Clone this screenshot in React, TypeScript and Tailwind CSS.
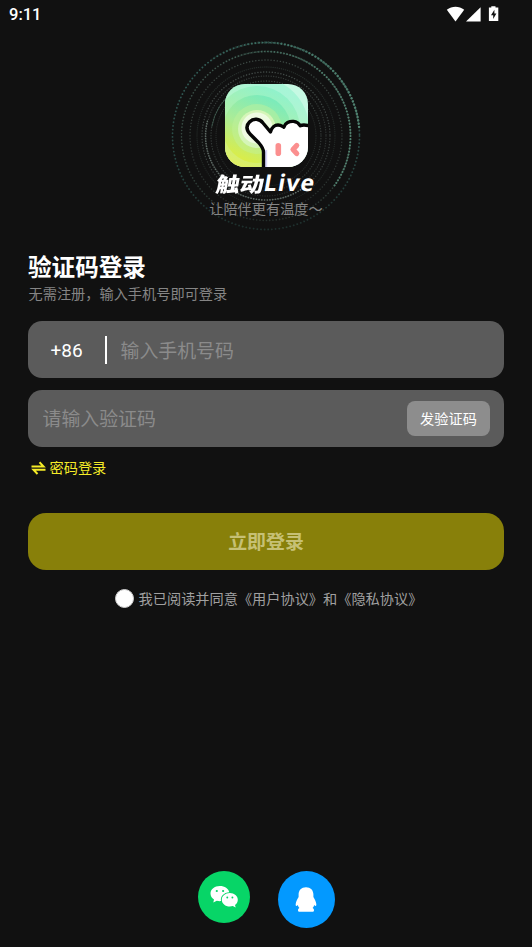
import { useState } from 'react';

const DOT_RINGS = [
  { r: 93.5, color: '#3f7a72', opacity: 0.75, width: 1.8, gap: 3.6 },
  { r: 84.5, color: '#5a8072', opacity: 0.65, width: 1.6, gap: 3.2 },
  { r: 76, color: '#5c7068', opacity: 0.6, width: 1.4, gap: 3 },
  { r: 69, color: '#4c5f58', opacity: 0.4, width: 1.3, gap: 2 },
  { r: 64, color: '#6c7b76', opacity: 0.6, width: 1.4, gap: 2.8 },
  { r: 60, color: '#6c7b76', opacity: 0.45, width: 1.3, gap: 2.4 },
  { r: 55, color: '#6c7b76', opacity: 0.55, width: 1.3, gap: 2.6 },
  { r: 50, color: '#5c6b66', opacity: 0.4, width: 1.2, gap: 2 },
];

// Angles are in degrees, clockwise from 3 o'clock
function arcPath(r: number, from: number, to: number): string {
  const a = (from * Math.PI) / 180;
  const b = (to * Math.PI) / 180;
  const large = to - from > 180 ? 1 : 0;
  return `M${100 + r * Math.cos(a)} ${100 + r * Math.sin(a)} A${r} ${r} 0 ${large} 1 ${100 + r * Math.cos(b)} ${100 + r * Math.sin(b)}`;
}

function Ripples() {
  return (
    <svg
      className="pointer-events-none absolute left-1/2 top-[36px] h-[200px] w-[200px] -translate-x-1/2"
      viewBox="0 0 200 200"
      fill="none"
      strokeLinecap="round"
    >
      <defs>
        <linearGradient id="fadeRight" x1="0" y1="0" x2="1" y2="0">
          <stop offset="0" stopColor="#4d8f7b" stopOpacity="0.1" />
          <stop offset="1" stopColor="#578c78" stopOpacity="0.9" />
        </linearGradient>
        <linearGradient id="ringFade" x1="0" y1="0" x2="0" y2="1">
          <stop offset="0" stopColor="#fff" />
          <stop offset="0.65" stopColor="#fff" stopOpacity="0.7" />
          <stop offset="1" stopColor="#fff" stopOpacity="0.35" />
        </linearGradient>
        <mask id="ringMask">
          <rect width="200" height="200" fill="url(#ringFade)" />
        </mask>
      </defs>
      <g mask="url(#ringMask)">
        {DOT_RINGS.map((ring) => (
          <circle
            key={ring.r}
            cx="100"
            cy="100"
            r={ring.r}
            stroke={ring.color}
            strokeOpacity={ring.opacity}
            strokeWidth={ring.width}
            strokeDasharray={`0.1 ${ring.gap}`}
          />
        ))}
      </g>
      <path d={arcPath(93.5, 235, 355)} stroke="url(#fadeRight)" strokeWidth="2.4" strokeDasharray="0.1 3.2" />
      <path d={arcPath(84.5, 240, 396)} stroke="url(#fadeRight)" strokeWidth="2" strokeDasharray="0.1 3" />
      <path d={arcPath(60.5, 130, 196)} stroke="#718079" strokeOpacity="0.8" strokeWidth="1.6" strokeDasharray="0.1 2.4" />
      <path d={arcPath(64, 55, 130)} stroke="#718079" strokeOpacity="0.8" strokeWidth="1.6" strokeDasharray="0.1 2.6" />
      <path d={arcPath(55, 190, 235)} stroke="#426354" strokeOpacity="0.7" strokeWidth="1" />
    </svg>
  );
}

function AppIcon() {
  const hand =
    'M38.5 86 V68 C38.5 64 36.5 62 33.5 58.5 L25 50 C21.5 46 21 41.5 24.5 38 C28.5 34 34.5 34.5 38 39 L45.5 48 C46.5 43.5 50 41 53 41 C56 41 57.5 42.5 58.8 43.2 C60 39 64.5 37 68.5 37.4 C72 37.8 74 39.5 75.2 41.8 C78 40.3 82 40.8 87 43';

  return (
    <svg className="relative h-[83px] w-[83px] overflow-hidden rounded-[20px]" viewBox="0 0 83 83">
      <defs>
        <linearGradient id="iconBg" gradientUnits="userSpaceOnUse" x1="52" y1="5" x2="18" y2="84">
          <stop offset="0" stopColor="#8ff2cd" />
          <stop offset="0.5" stopColor="#b0f0aa" />
          <stop offset="1" stopColor="#e0ee60" />
        </linearGradient>
        <linearGradient id="iconRing" gradientUnits="userSpaceOnUse" x1="48" y1="14" x2="20" y2="78">
          <stop offset="0" stopColor="#79ebbd" />
          <stop offset="0.5" stopColor="#aaec98" />
          <stop offset="1" stopColor="#dced45" />
        </linearGradient>
      </defs>
      <rect width="83" height="83" fill="#c6f9e3" />
      <circle cx="32" cy="45" r="52" fill="url(#iconBg)" opacity="0.55" />
      <circle cx="32" cy="45" r="43" fill="url(#iconBg)" />
      <circle cx="32" cy="45" r="34" fill="url(#iconRing)" />
      <circle cx="32" cy="45" r="25" fill="#c3f19b" opacity="0.45" />
      <circle cx="32" cy="45" r="19" fill="#d5f5b8" />
      <circle cx="32" cy="44" r="15.5" fill="#effbe2" />
      <path d={`${hand} V86 Z`} fill="#fff" />
      <path d="M40.7 66 V83" stroke="#d8d8fa" strokeWidth="3" />
      <path d={hand} fill="none" stroke="#050505" strokeWidth="3.4" strokeLinejoin="round" />
      <rect x="50.5" y="59" width="5.6" height="13" rx="2.8" fill="#fb8f8f" />
      <path d="M71.7 61.5 L68 65.5 L71.7 69.5" fill="none" stroke="#fb8f8f" strokeWidth="5.2" strokeLinecap="round" strokeLinejoin="round" />
    </svg>
  );
}

function StatusBar() {
  return (
    <header className="flex h-[30px] items-center justify-between pl-[9px] pr-[32px] font-['Roboto',sans-serif] text-[16.5px] font-medium">
      <span className="pt-px">9:11</span>
      <svg className="h-[18px] w-[54px]" viewBox="0 0 54 18" fill="#fff">
        <path d="M0.8 3.8 C6 -0.4 13 -0.4 18.2 3.8 L9.5 15.5 Z" />
        <path d="M34.6 1.2 V15.6 H20 Z" />
        <path d="M45.3 1.6 V0.2 H49.5 V1.6 H52.3 V15 H42.9 V1.6 Z" />
        <path d="M48.4 3.8 L45 9.3 H47.2 V13 L50.4 7.4 H48.4 Z" fill="#111" />
      </svg>
    </header>
  );
}

function WechatIcon() {
  return (
    <svg className="h-[24px] w-[28px]" viewBox="0 0 28 24" fill="#fff">
      <path d="M9.8 1 C4.6 1 0.5 4.3 0.5 8.6 C0.5 11.1 1.8 13.2 4 14.6 L3.3 17.5 L6.8 15.7 C8.3 16.2 9.8 16.2 11.1 16.1 C10 11.6 14 7.2 19.3 7.2 C18.6 3.6 14.7 1 9.8 1 Z" />
      <path d="M19.8 8 C15.3 8 11.8 11 11.8 14.7 C11.8 18.5 15.3 21.5 19.8 21.5 C20.9 21.5 21.9 21.3 22.8 21 L25.7 22.5 L25 19.9 C26.8 18.6 27.8 16.8 27.8 14.7 C27.8 11 24.3 8 19.8 8 Z" />
      <g fill="#07d567">
        <circle cx="6.8" cy="6" r="1.1" />
        <circle cx="13.1" cy="6" r="1.1" />
        <circle cx="17.3" cy="12.5" r="0.95" />
        <circle cx="22.4" cy="12.5" r="0.95" />
      </g>
    </svg>
  );
}

function QqIcon() {
  return (
    <svg className="h-[25px] w-[22px]" viewBox="0 0 22 25" fill="#fff">
      <path d="M11 0.2 C6.4 0.2 3.6 3.2 3.6 7.6 V10 C2.2 12.6 1 14.6 0.7 17 C0.5 19 1.3 19.6 2.8 18 C3.1 19.2 3.6 20.2 4.4 21 C3.2 21.8 2.9 22.6 3 23.4 C3.1 24.6 4.2 24.8 6 24.8 H16 C17.8 24.8 18.9 24.6 19 23.4 C19.1 22.6 18.8 21.8 17.6 21 C18.4 20.2 18.9 19.2 19.2 18 C20.7 19.6 21.5 19 21.3 17 C21 14.6 19.8 12.6 18.4 10 V7.6 C18.4 3.2 15.6 0.2 11 0.2 Z" />
    </svg>
  );
}

export default function App() {
  const [phone, setPhone] = useState('');
  const [code, setCode] = useState('');
  const [agreed, setAgreed] = useState(false);

  return (
    <div className="relative flex h-[947px] w-full flex-col overflow-hidden bg-[#111111] font-['Roboto','Noto_Sans_CJK_SC',sans-serif] text-white">
      <Ripples />
      <StatusBar />

      <section className="relative flex flex-col items-center pt-[54px]">
        <AppIcon />
        <h1 className="mt-[5px] flex h-[25px] -skew-x-[10deg] items-center whitespace-nowrap font-['Noto_Sans_CJK_SC',sans-serif] text-[24px] font-black leading-[25px]">
          <span className="-mt-[5px] scale-y-[0.86]">触动</span>
          <span className="-mt-[4px] font-['Noto_Sans',sans-serif] text-[23px] font-bold tracking-[1.2px]">Live</span>
        </h1>
        <p className="mt-px text-[14.2px] leading-[22px] text-[#858585]">让陪伴更有温度～</p>
      </section>

      <main className="flex flex-col px-[28px] pt-[31px]">
        <h2 className="pt-px text-[23.6px] font-bold leading-[32px]">验证码登录</h2>
        <p className="-mt-px pl-[0.5px] text-[14.2px] leading-[22px] text-[#858585]">无需注册，输入手机号即可登录</p>

        <div className="mt-[16px] flex h-[57px] items-center rounded-[14px] bg-[#5b5b5b]">
          <span className="w-[77px] pt-[3px] text-center text-[19px]">+86</span>
          <span className="h-[28px] w-[1.5px] bg-white" />
          <input
            className="ml-[14px] min-w-0 flex-1 bg-transparent pt-[5px] text-[18.9px] outline-none placeholder:text-[#8b8b8b]"
            placeholder="输入手机号码"
            value={phone}
            onChange={(e) => setPhone(e.target.value)}
          />
        </div>

        <div className="mt-[12px] flex h-[57px] items-center rounded-[14px] bg-[#5b5b5b] pl-[14.5px] pr-[14px]">
          <input
            className="min-w-0 flex-1 bg-transparent pt-[4px] text-[18.9px] outline-none placeholder:text-[#8b8b8b]"
            placeholder="请输入验证码"
            value={code}
            onChange={(e) => setCode(e.target.value)}
          />
          <button className="h-[35px] w-[83px] rounded-[8px] bg-[#8d8d8d] pt-[2px] text-[14.2px]">发验证码</button>
        </div>

        <button className="mt-[10px] flex h-[22px] items-center gap-[4px] self-start pl-[2.5px] text-[14.2px] text-[#f5ec27]">
          <svg className="h-[14px] w-[15px]" viewBox="0 0 15 14" fill="none" stroke="currentColor" strokeWidth="2">
            <path d="M0.5 5.4 H12.5 L8.5 1.2" />
            <path d="M14.5 8.8 H2.5 L6.5 13" />
          </svg>
          <span className="pt-[2px]">密码登录</span>
        </button>

        <button className="mt-[34px] h-[57px] rounded-[18px] bg-[#88800a] pt-[3px] text-[18.9px] font-bold text-[#c6c075]">
          立即登录
        </button>

        <label className="mt-[18px] flex h-[22px] items-center justify-center gap-[5px] pl-[5px] text-[14.2px] text-[#a0a0a0]">
          <input
            type="checkbox"
            checked={agreed}
            onChange={(e) => setAgreed(e.target.checked)}
            className="-mt-px h-[19px] w-[19px] appearance-none rounded-full border border-[#cfcfcf] bg-white checked:bg-[#f5ec27]"
          />
          <span className="pt-px">我已阅读并同意《用户协议》和《隐私协议》</span>
        </label>
      </main>

      <footer className="mt-auto flex items-start justify-center gap-[28px] pb-[19px]">
        <button className="flex h-[52px] w-[52px] items-center justify-center rounded-full bg-[#07d567]">
          <WechatIcon />
        </button>
        <button className="flex h-[57px] w-[57px] items-center justify-center rounded-full bg-[#0399ff]">
          <QqIcon />
        </button>
      </footer>
    </div>
  );
}
